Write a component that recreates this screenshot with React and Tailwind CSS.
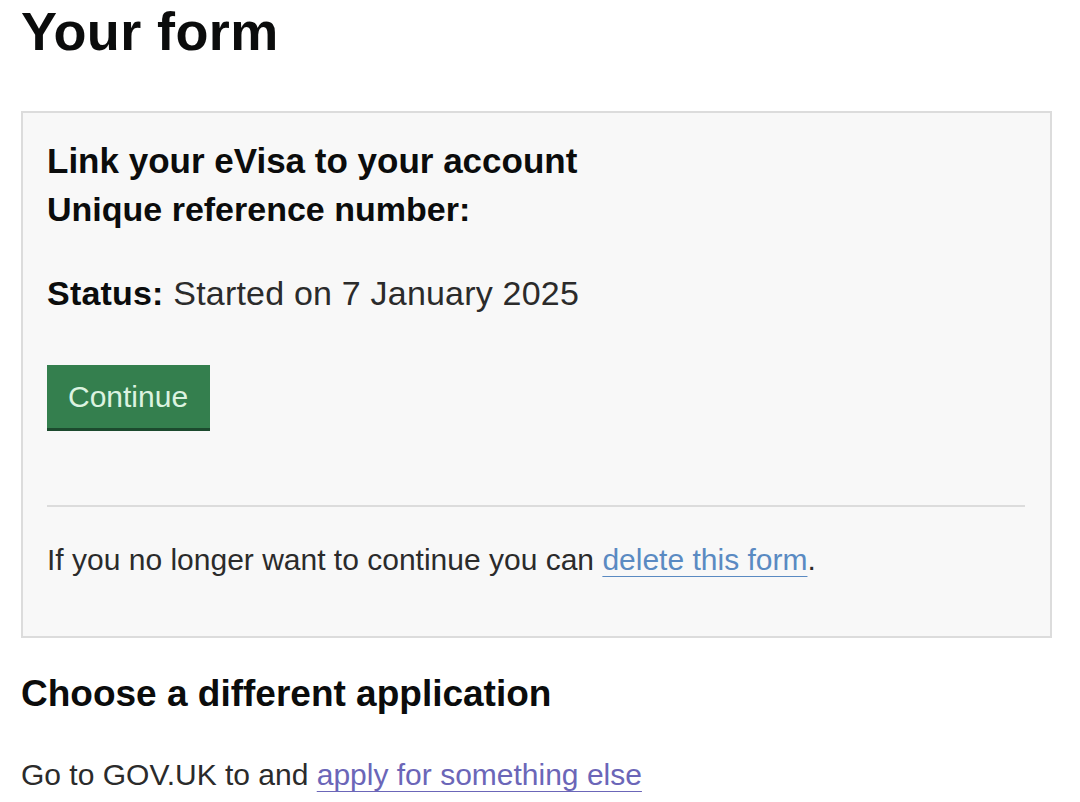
import React from 'react';

const font = { fontFamily: '"Liberation Sans", Arial, sans-serif' };

export default function App() {
  return (
    <div className="min-h-screen bg-white text-[#0b0c0c] pl-[21px] pr-[28px] pt-px" style={font}>
      <h1 className="text-[54px] font-bold leading-[60px] tracking-[0.4px]">Your form</h1>

      <div className="mt-[50px] border-2 border-[#dcdcdc] bg-[#f8f8f8] pl-[24px] pr-[25px] pt-[26px] pb-[56px]">
        <h2 className="text-[35px] font-bold leading-[44px]">Link your eVisa to your account</h2>
        <p className="text-[34px] font-bold leading-[40px] mt-[6px]">Unique reference number:</p>

        <p className="text-[34px] leading-[40px] mt-[44px] text-[#2b2b2b] tracking-[0.2px]">
          <span className="font-bold text-[#0b0c0c]">Status:</span> Started on 7 January 2025
        </p>

        <div className="mt-[52px] flex">
          <button className="bg-[#347f4e] text-[#dcf3e0] text-[30px] leading-[63px] pl-[21px] pr-[22px] shadow-[0_3px_0_#1c4a2e]">
            Continue
          </button>
        </div>

        <hr className="mt-[77px] border-0 border-t-2 border-[#dcdcdc]" />

        <p className="mt-[33px] text-[30px] leading-[40px] text-[#2b2b2b]">
          If you no longer want to continue you can{' '}
          <a href="#" className="text-[#5a8ac2] underline decoration-1 underline-offset-[6px]">delete this form</a>.
        </p>
      </div>

      <h2 className="mt-[34px] text-[37px] font-bold leading-[44px]">Choose a different application</h2>
      <p className="mt-[39px] text-[30px] leading-[40px] text-[#2b2b2b]">
        Go to GOV.UK to and{' '}
        <a href="#" className="text-[#6b66b8] underline decoration-1 underline-offset-[6px]">apply for something else</a>
      </p>
    </div>
  );
}
